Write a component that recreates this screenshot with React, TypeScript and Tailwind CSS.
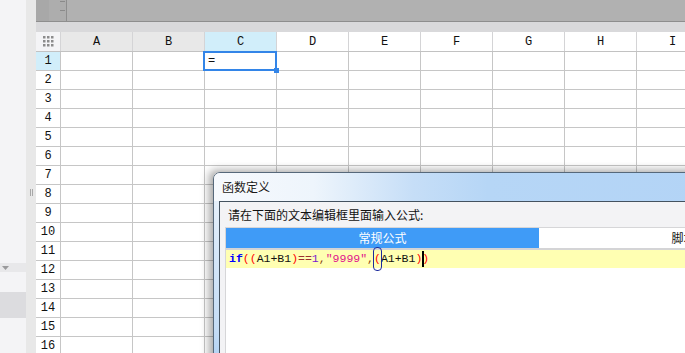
import React from 'react';

const cols = ['A', 'B', 'C', 'D', 'E', 'F', 'G', 'H', 'I'];
const rows = Array.from({ length: 16 }, (_, i) => i + 1);

function headerBg(c: string) {
  if (c === 'C') return 'bg-[#d1eefa]';
  if (c === 'A' || c === 'B') return 'bg-[#e8e8e8]';
  return 'bg-white';
}

export default function App() {
  return (
    <div
      className="relative w-[685px] h-[353px] overflow-hidden bg-white flex"
      style={{ fontFamily: '"Liberation Mono", "DejaVu Sans Mono", monospace' }}
    >
      {/* left panel */}
      <div className="w-[26px] shrink-0 bg-[#f4f4f6] flex flex-col">
        <div className="h-[263px]" />
        <div className="h-[9px] bg-[#e8e8ea] flex items-center pl-[2px]">
          <svg width="7" height="4" viewBox="0 0 7 4">
            <path d="M0 0 L7 0 L3.5 4 Z" fill="#9a9a9c" />
          </svg>
        </div>
        <div className="h-[20px]" />
        <div className="h-[26px] bg-[#dcdcdf]" />
      </div>
      {/* splitter strip */}
      <div className="w-[10px] shrink-0 bg-[#e8e8e8] flex justify-center gap-[1px] pt-[189px]">
        <div className="w-[1px] h-[7px] bg-[#a8a8a8]" />
        <div className="w-[1px] h-[7px] bg-[#a8a8a8]" />
      </div>
      {/* main */}
      <div className="flex-1 min-w-0 flex flex-col">
        <div className="h-[22px] shrink-0 flex border-b border-[#8e8e8e]">
          <div className="w-[13px] bg-[#a8a8a8]" />
          <div className="w-[18px] bg-[#adadad] border-r border-[#8e8e8e] flex justify-end">
            <svg width="6" height="21" viewBox="0 0 6 21">
              <rect x="0" y="1" width="5" height="1" fill="#8a8a8a" />
              <rect x="0" y="10" width="5" height="1" fill="#8a8a8a" />
            </svg>
          </div>
          <div className="flex-1 bg-[#b1b1b1]" />
        </div>
        <div className="h-[10px] shrink-0 bg-[#d9d9db]" />
        {/* grid */}
        <div className="flex flex-col text-[12px] text-[#111]">
          <div className="flex h-[20px] border-b border-[#c2c2c2]">
            <div className="w-[25px] shrink-0 border-r border-[#d4d4d6] bg-[#f4f4f6] flex items-center justify-center">
              <svg width="11" height="11" viewBox="0 0 11 11">
                {[0, 4, 8].map((y) =>
                  [0, 4, 8].map((x) => (
                    <rect key={`${x}-${y}`} x={x} y={y} width="2.5" height="2.5" fill="#8c8c8c" />
                  ))
                )}
              </svg>
            </div>
            {cols.map((c) => (
              <div
                key={c}
                className={`w-[72px] shrink-0 border-r border-[#d4d4d6] flex items-center justify-center ${headerBg(c)}`}
              >
                {c}
              </div>
            ))}
          </div>
          {rows.map((r) => (
            <div key={r} className="flex h-[19px] border-b border-[#c6c6c6]">
              <div
                className={`w-[25px] shrink-0 border-r border-[#c6c6c6] flex items-center justify-center ${
                  r === 1 ? 'bg-[#d1eefa]' : 'bg-white'
                }`}
              >
                {r}
              </div>
              {cols.map((c) => (
                <div key={c} className="w-[72px] shrink-0 border-r border-[#c6c6c6] flex items-center pl-[3px]">
                  {r === 1 && c === 'C' ? '=' : ''}
                </div>
              ))}
            </div>
          ))}
        </div>
      </div>

      {/* selection */}
      <div className="absolute left-[203px] top-[51px] w-[74px] h-[20px] border-2 border-[#3385e8]" />
      <div className="absolute left-[274px] top-[68px] w-[5px] h-[5px] bg-[#3385e8]" />

      {/* dialog */}
      <div className="absolute left-[213px] top-[172px] w-[500px] h-[200px] rounded-tl-[7px] border border-[#56687a] shadow-[-4px_-2px_9px_rgba(0,0,0,0.35)] bg-[linear-gradient(180deg,#eef4fb_0%,#d6e7f8_40%,#c4dcf5_80%,#a9cdf3_100%)] overflow-hidden flex flex-col">
        <div
          className="h-[28px] shrink-0 flex items-center pl-[8px] bg-[linear-gradient(90deg,#f6f9fd_0%,#eef5fc_20%,#c6def7_40%,#b6d6f6_55%,#b3d4f6_100%)] text-[12px] text-[#1a1a1a] [text-shadow:0_0_5px_#fff,0_0_3px_#fff]"
          style={{ fontFamily: '"Noto Sans CJK SC", "Noto Sans", sans-serif' }}
        >
          函数定义
        </div>
        <div className="flex-1 flex pl-[5px]">
          <div className="flex-1 flex flex-col border-l border-t border-[#44525f] bg-[#f3f3f5]">
            <div
              className="h-[25px] shrink-0 flex items-center pl-[8px] text-[12px] text-[#111]"
              style={{ fontFamily: '"Noto Sans CJK SC", "Noto Sans", sans-serif' }}
            >
              请在下面的文本编辑框里面输入公式:
            </div>
            <div className="flex-1 ml-[5px] border-l border-t border-[#d6d6d8] bg-white flex flex-col">
              <div
                className="h-[20px] shrink-0 flex text-[12px]"
                style={{ fontFamily: '"Noto Sans CJK SC", "Noto Sans", sans-serif' }}
              >
                <div className="w-[313px] shrink-0 bg-[#3f9bf7] text-white flex items-center justify-center">
                  常规公式
                </div>
                <div className="w-[313px] shrink-0 bg-white text-[#111] flex items-center justify-center">
                  脚本公式
                </div>
              </div>
              <div className="h-[2px] shrink-0 bg-[#d4d4d6]" />
              <div className="h-[18px] shrink-0 bg-[#ffffb2] flex items-center pl-[3px] text-[11.5px] whitespace-pre">
                <span className="font-bold text-[#0000ff]">if</span>
                <span className="text-[#ff0000]">((</span>
                <span className="text-[#111]">A1+B1</span>
                <span className="text-[#ff0000]">)</span>
                <span className="text-[#9a3030]">==</span>
                <span className="text-[#7a1ad0]">1</span>
                <span className="text-[#8b4513]">,</span>
                <span className="text-[#e0148c]">"9999"</span>
                <span className="text-[#8b4513]">,</span>
                <span className="relative text-[#ff0000]">
                  (
                  <span className="absolute left-[-1px] right-[-1px] top-[-3px] bottom-[-3px] rounded-[4px] border border-[#1c2a9c]" />
                </span>
                <span className="text-[#111]">A1+B1</span>
                <span className="text-[#ff0000]">)</span>
                <span className="inline-block w-[2px] h-[16px] bg-black -mr-[2px]" />
                <span className="text-[#ff0000]">)</span>
              </div>
              <div className="flex-1 bg-white" />
            </div>
          </div>
        </div>
      </div>
    </div>
  );
}
